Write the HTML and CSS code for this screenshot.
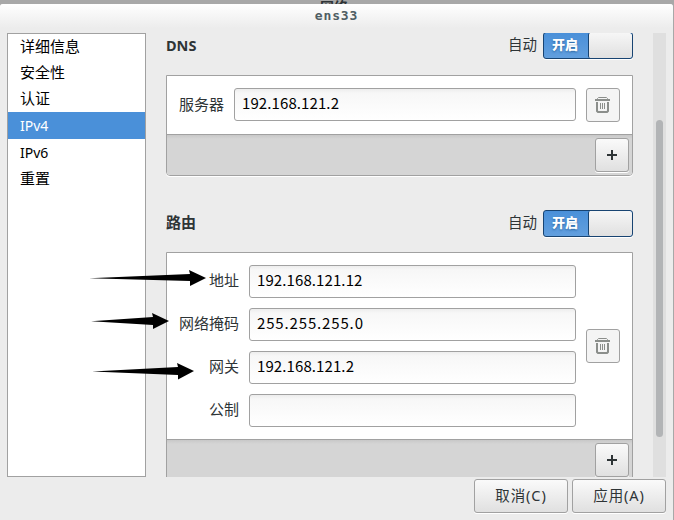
FILE: index.html
```html
<!DOCTYPE html>
<html lang="zh-CN">
<head>
<meta charset="utf-8">
<title>ens33</title>
<link rel="stylesheet" href="styles.css">
</head>
<body>
<div class="backdrop"><span class="behind">网络</span></div>
<main class="window">
  <header class="titlebar">ens33</header>
  <div class="body">
    <nav class="sidebar">
      <div class="item">详细信息</div>
      <div class="item">安全性</div>
      <div class="item">认证</div>
      <div class="item latin selected">IPv4</div>
      <div class="item latin">IPv6</div>
      <div class="item">重置</div>
    </nav>
    <div class="scroller">
      <section>
        <div class="section-head">
          <h2 class="latin-title">DNS</h2><span class="auto">自动</span>
          <div class="switch"><span class="on">开启</span><span class="knob"></span></div>
        </div>
        <div class="panel">
          <div class="rows">
            <div class="fields">
              <label class="field server"><span>服务器</span><span class="input">192.168.121.2</span></label>
            </div>
            <div class="button square flat"><svg class="trash" viewBox="0 0 16 16"><path d="M2.500 2V1.500L3.500 .5H11.500L12.500 1.500V2" fill="none" stroke="#8b8e8b"/><path d="M0 2H15V4H0Z" fill="#8b8e8b"/><path d="M2 5V14L3 15H12L13 14V5" fill="none" stroke="#8b8e8b" stroke-width="2"/><path d="M5.500 6V12M7.500 6V12M9.500 6V12" stroke="#8b8e8b"/></svg></div>
          </div>
          <div class="toolbar"><div class="button square"><svg class="plus" viewBox="0 0 10 10"><path d="M0 5H10M5 0V10" stroke="#2e3436" stroke-width="2"/></svg></div></div>
        </div>
      </section>
      <section class="routes">
        <div class="section-head">
          <h2>路由</h2><span class="auto">自动</span>
          <div class="switch"><span class="on">开启</span><span class="knob"></span></div>
        </div>
        <div class="panel">
          <div class="rows">
            <div class="fields">
              <label class="field"><span>地址</span><span class="input">192.168.121.12</span></label>
              <label class="field"><span>网络掩码</span><span class="input mask">255.255.255.0</span></label>
              <label class="field"><span>网关</span><span class="input">192.168.121.2</span></label>
              <label class="field"><span>公制</span><span class="input"></span></label>
            </div>
            <div class="button square flat"><svg class="trash" viewBox="0 0 16 16"><path d="M2.500 2V1.500L3.500 .5H11.500L12.500 1.500V2" fill="none" stroke="#8b8e8b"/><path d="M0 2H15V4H0Z" fill="#8b8e8b"/><path d="M2 5V14L3 15H12L13 14V5" fill="none" stroke="#8b8e8b" stroke-width="2"/><path d="M5.500 6V12M7.500 6V12M9.500 6V12" stroke="#8b8e8b"/></svg></div>
          </div>
          <div class="toolbar"><div class="button square"><svg class="plus" viewBox="0 0 10 10"><path d="M0 5H10M5 0V10" stroke="#2e3436" stroke-width="2"/></svg></div></div>
        </div>
      </section>
    </div>
    <div class="track"><div class="thumb"></div></div>
  </div>
  <footer class="actions">
    <div class="button action">取消(C)</div>
    <div class="button action">应用(A)</div>
  </footer>
</main>
<svg class="arrows" viewBox="0 0 674 520">
  <path d="M89 278.3L190 274L189 270L206 278L190 286L190 281Z"/>
  <path d="M91 321.3L153 317L152 313L169 321L153 329L153 325Z"/>
  <path d="M92 371.4L178 367L177 363L194 371L178 379.500L178 375Z"/>
</svg>
</body>
</html>
```
FILE: styles.css
```css
* { box-sizing: border-box; }
body {
  margin: 0;
  width: 674px;
  height: 520px;
  overflow: hidden;
  position: relative;
  background: #a8a8a8;
  color: #2e3436;
  font: 15px/20px "Noto Sans", "Noto Sans CJK SC", sans-serif;
}
.backdrop { height: 4px; overflow: hidden; }
.behind { display: block; margin-left: 320px; font-size: 14px; font-weight: bold; line-height: 14px; }
.window {
  width: 673px;
  height: 516px;
  background: #ececec;
  border-radius: 3px 3px 0 0;
}
.titlebar {
  height: 29px;
  border-radius: 3px 3px 0 0;
  background: linear-gradient(#fff, #ececec 24px);
  text-align: center;
  color: #4f5e64;
  font: bold 13px/23px "DejaVu Sans Mono", monospace;
  letter-spacing: 0.9px;
}
.body { display: flex; height: 444px; padding-left: 7px; }
.sidebar {
  width: 139px;
  border: 1px solid #a1a1a1;
  background: #fff;
  color: #000;
}
.item { height: 26px; padding-left: 12px; line-height: 24px; }
.latin { height: 27px; line-height: 28px; font-size: 14px; }
.selected { background: #4a90d9; color: #fff; }
.scroller { width: 467px; margin-left: 20px; height: 444px; overflow: hidden; }
.section-head {
  display: flex;
  align-items: center;
  height: 27px;
  margin-top: -1px;
}
h2 { margin: 0; flex: 1; font-size: 15px; line-height: 23px; padding-bottom: 2px; }
.latin-title { font-size: 14.5px; padding-bottom: 0; }
.auto { margin: -3px 6px 0 0; font-size: 14.5px; }
.switch {
  display: flex;
  width: 90px;
  height: 27px;
  border: 1px solid #184472;
  border-radius: 3px;
  overflow: hidden;
  background: linear-gradient(#4a90d9, #629fde);
  box-shadow: 0 1px #fff;
}
.on {
  width: 44px;
  padding-right: 2px;
  text-align: center;
  color: #fff;
  font-weight: 900;
  font-size: 13px;
  line-height: 22px;
  text-shadow: 0 1px 2px #2a65a0;
}
.knob {
  flex: 1;
  border-left: 1px solid #184472;
  border-radius: 2px;
  background: linear-gradient(#f6f6f6, #e0e0e0);
}
.panel {
  margin-top: 16px;
  border: 1px solid #a1a1a1;
  border-radius: 0 0 4px 4px;
  background: #fff;
  box-shadow: 0 1px #fff;
}
.rows { display: flex; align-items: center; gap: 10px; padding: 12px 12px 12px 11px; }
.rows > .flat { flex: none; }
.fields { display: grid; gap: 10px; flex: 1; }
.field {
  display: grid;
  grid-template-columns: 61px 327px;
  column-gap: 10px;
  align-items: center;
}
.field > span:first-child { text-align: right; margin-top: -4px; }
.server { grid-template-columns: 46px 342px; }
.server > span:first-child { margin-top: -3px; }
.server .input { height: 33px; margin-bottom: 1px; }
.input {
  height: 33px;
  border: 1px solid #a1a1a1;
  border-radius: 3px;
  padding-left: 7px;
  background: linear-gradient(#ededed, #f7f7f7 4px, #fff);
  color: #000;
  font: 15px/27px "Noto Sans CJK SC", sans-serif;
  letter-spacing: 0.1px;
}
.mask { letter-spacing: 0.85px; }
.button {
  border: 1px solid #a1a1a1;
  border-radius: 3px;
  background: linear-gradient(#fafafa, #e0e0e0);
  box-shadow: 0 1px #fff;
}
.square { width: 34px; height: 34px; display: grid; place-items: center; }
.flat { background: #f4f4f4; box-shadow: none; }
.trash { width: 16px; height: 16px; }
.plus { width: 10px; height: 10px; }
.toolbar {
  height: 41px;
  padding: 3px 3px 0 0;
  border-top: 1px solid #a1a1a1;
  border-radius: 0 0 3px 3px;
  display: flex;
  justify-content: flex-end;
  background: linear-gradient(#c8c8c8, #d5d5d5 4px);
}
.routes { margin-top: 34px; }
.routes .section-head { margin-top: 0; }
.routes .panel { margin-top: 15px; }
.track { width: 13px; margin-left: 20px; background: #dfdfdf; padding: 87px 3px 0; }
.thumb { width: 7px; height: 317px; border-radius: 4px; background: #b2b4b6; }
.actions { display: flex; justify-content: flex-end; gap: 4px; padding: 2px 7px 0 0; }
.action { width: 94px; height: 34px; text-align: center; line-height: 31px; font-size: 14.5px; letter-spacing: 0.9px; }
.arrows { position: absolute; left: 0; top: 0; width: 674px; height: 520px; fill: #000; }
```
